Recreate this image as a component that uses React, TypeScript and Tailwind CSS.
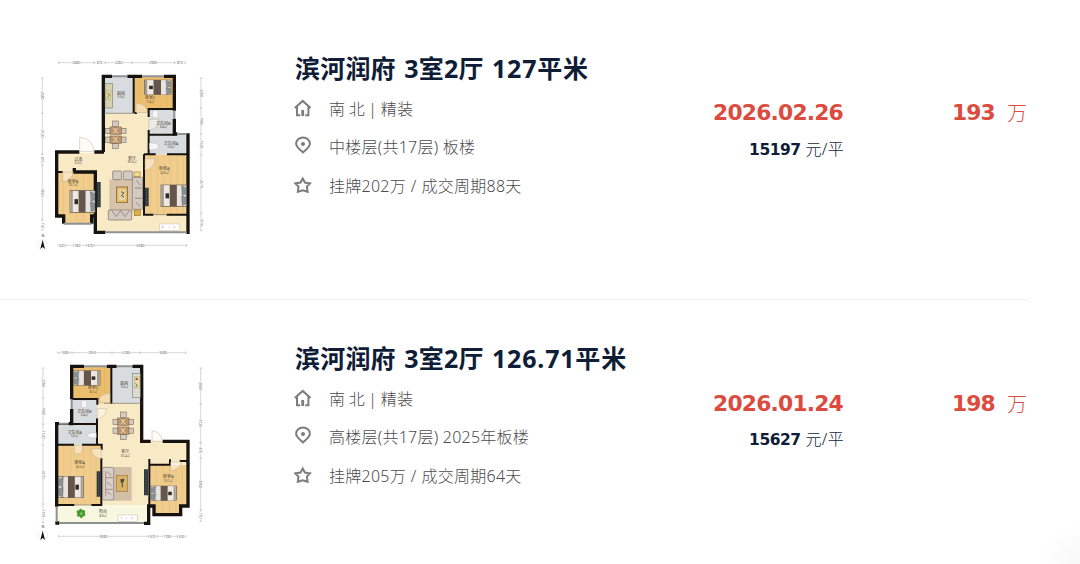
import type { ReactNode } from 'react';

type Deal = {
  id: number;
  title: string;
  size: string;
  orient: string;
  floor: string;
  cycle: string;
  date: string;
  price: string;
  unitPrice: string;
  plan: ReactNode;
};

const WALL = '#15120f';
const WOOD = '#ebbe6e';
const LIGHT_WOOD = '#f0cd8d';
const FLOOR = '#f9eac6';
const TILE = '#d9dcde';

// 户型图里的家具
function Bed({ x, y, w = 78, h = 64, flip = false }: { x: number; y: number; w?: number; h?: number; flip?: boolean }) {
  return (
    <g transform={`translate(${flip ? x + w : x} ${y}) scale(${(flip ? -w : w) / 78} ${h / 64})`}>
      <rect width="78" height="64" fill="#dcd6ce" stroke="#5d5047" strokeWidth="2" />
      <rect x="2" y="1" width="7" height="62" fill="#a59b92" />
      <rect x="9" y="1" width="17" height="62" fill="#eee8e0" />
      <rect x="27" y="0" width="22" height="64" fill="#65564b" />
      <rect x="49" y="1" width="12" height="62" fill="#e9e4de" />
      <path d="M64 3l12 6v18l-10 4zM64 33l12 4v20l-10 4z" fill="#8496a2" stroke="#5b5855" strokeWidth="1.5" />
      <rect x="14" y="25" width="11" height="15" fill="#2f2b29" />
    </g>
  );
}

function DiningTable({ x, y }: { x: number; y: number }) {
  return (
    <g transform={`translate(${x} ${y})`} stroke="#66564a" strokeWidth="1.5">
      <g fill="#d3ccc3">
        <rect x="22" y="0" width="18" height="16" />
        <rect x="22" y="68" width="18" height="15" />
        <rect x="0" y="22" width="17" height="16" />
        <rect x="0" y="48" width="17" height="16" />
        <rect x="45" y="22" width="17" height="16" />
        <rect x="45" y="48" width="17" height="16" />
      </g>
      <rect x="14" y="18" width="34" height="22" fill="#c09566" />
      <rect x="14" y="45" width="34" height="22" fill="#c09566" />
      <path d="M24 20l13 17M37 20L24 37M24 47l13 17M37 47L24 64" stroke="#eadfce" strokeWidth="3" />
    </g>
  );
}

function Tag({ x, y, name, area }: { x: number; y: number; name: string; area: string }) {
  return (
    <text x={x} y={y} textAnchor="middle" fill="#4a4236" fontSize="12">
      {name}
      <tspan x={x} dy="11" fontSize="9">
        {area}
      </tspan>
    </text>
  );
}

function HRule({ y, stops, labels }: { y: number; stops: number[]; labels: string[] }) {
  return (
    <g>
      <path d={`M${stops[0]} ${y}H${stops[stops.length - 1]}`} stroke="#bdbdbd" strokeWidth="1.8" />
      {stops.map((s) => (
        <path key={s} d={`M${s} ${y - 4}v8`} stroke="#a0a0a0" strokeWidth="1.5" />
      ))}
      {labels.map((l, i) => {
        const cx = (stops[i] + stops[i + 1]) / 2;
        return (
          <g key={i}>
            <rect x={cx - 11} y={y - 5} width="22" height="10" fill="#fff" />
            <text x={cx} y={y + 4} fontSize="10" textAnchor="middle" fill="#666">
              {l}
            </text>
          </g>
        );
      })}
    </g>
  );
}

function VRule({ x, stops, labels }: { x: number; stops: number[]; labels: string[] }) {
  return (
    <g transform={`translate(${x} 0) rotate(90)`}>
      <HRule y={0} stops={stops} labels={labels} />
    </g>
  );
}

function Compass({ y }: { y: number }) {
  return (
    <g>
      <text x="39" y={y - 22} fontSize="11" textAnchor="middle" fill="#333">
        N
      </text>
      <circle cx="38" cy={y} r="15" fill="none" stroke="#dedede" strokeWidth="1.5" />
      <path d={`M38 ${y - 15}l7 28-7-6-7 6z`} fill="#111" />
    </g>
  );
}

function PlanFrame({ children }: { children: ReactNode }) {
  return (
    <svg
      viewBox="0 0 570 615"
      className="h-[205px] w-[190px] shrink-0 font-['Noto_Sans','Noto_Sans_CJK_SC',sans-serif]"
    >
      {children}
    </svg>
  );
}

function PlanA() {
  return (
    <PlanFrame>
      <HRule y={38} stops={[86, 192, 226, 305, 433, 466]} labels={['2680', '870', '2280', '2980', '810']} />
      <VRule x={37} stops={[84, 190, 312, 345, 510, 540]} labels={['2680', '3120', '870', '3360', '710']} />
      <VRule x={513} stops={[84, 174, 252, 314, 490, 542]} labels={['2280', '1980', '1520', '4570', '1310']} />
      <HRule y={586} stops={[84, 108, 170, 194, 470]} labels={['620', '1780', '670', '6980']} />
      <Compass y={584} />

      {/* 地面 */}
      <path d="M80 308H222V190H358V310H474V548H195V368H80z" fill={FLOOR} />
      <path d="M222 80h88v110h-88z" fill={TILE} />
      <path d="M312 80h121v109H312z" fill={WOOD} />
      <path d="M356 178h77v75h-77zM356 254h118v59H356z" fill={TILE} />
      <path d="M80 366H196V496H184V520H101V496H80z" fill={LIGHT_WOOD} />
      <path d="M342 314H474V494H342z" fill={LIGHT_WOOD} />
      <path
        d="M330 82v106M350 82v95M370 82v95M390 82v95M410 82v95M100 368v126M120 368v126M140 368v150M160 368v150M180 368v126M362 316v176M382 316v176M402 316v176M422 316v176M442 316v176M460 316v176"
        stroke="#ddb062"
        strokeWidth="1.5"
        opacity="0.5"
      />

      {/* 墙体 */}
      <g fill="none" stroke={WALL} strokeWidth="10" strokeLinejoin="miter">
        <path d="M148 306H80V498H101V521M185 521V498H196V366H133V354M220 306V79H246M193 306H222M292 79H336M402 79H433V182M433 206V252H442M474 250V552M196 494V547H226" />
        <path d="M311 80v110" strokeWidth="6" />
        <path d="M314 189h7M353 177h80M356 177v24M356 240v73M356 254h78M342 313h35M411 313h63M342 313v181H370M410 494h64M82 366h16" strokeWidth="6" />
      </g>
      <path d="M246 79h46M336 79h66M433 182v24M442 252h27M101 521h84M226 547h244" stroke="#8d9395" strokeWidth="6" />
      <path d="M222 190h90M370 494h40" stroke="#756d60" strokeWidth="2" />

      {/* 门 */}
      <g fill="#fffaf0" fillOpacity="0.5" stroke="#bcae96" strokeWidth="1.5">
        <path d="M149 304v-42q39 2 43 42z" />
        <path d="M318 188v-28q32 0 34 28z" />
        <path d="M357 208h30q-2 30-30 32z" />
        <path d="M345 326h30q-2 30-30 36z" />
        <path d="M98 366h32q-2 24-32 30z" />
      </g>

      {/* 家具 */}
      <rect x="225" y="101" width="23" height="73" fill="#d5d1b1" stroke="#6a6758" strokeWidth="1.5" />
      <rect x="228" y="123" width="14" height="24" fill="#eee39e" stroke="#777" />
      <path d="M233 128l5 7-5 8" stroke="#333" fill="none" strokeWidth="2" />
      <Bed x={343} y={90} w={80} h={44} />
      <DiningTable x={226} y={213} />
      <Bed x={120} y={422} w={75} h={65} />
      <Bed x={393} y={405} w={76} h={64} />
      <rect x="367" y="181" width="17" height="22" fill="#f5f5f5" stroke="#aaa" />
      <path d="M358 279h14q15 1 14 11t-14 9h-14z" fill="#f6f6f6" stroke="#999" />
      <rect x="238" y="388" width="72" height="99" fill="#d6c3a9" />
      <g fill="#d3cac2" stroke="#7d6c65" strokeWidth="2">
        <rect x="248" y="363" width="27" height="26" rx="3" />
        <rect x="280" y="363" width="27" height="26" rx="3" />
        <rect x="307" y="382" width="31" height="96" rx="3" />
        <rect x="235" y="480" width="70" height="30" rx="3" />
        <path d="M315 414h22M315 445h22M246 482l13 18 13-18 13 18 13-18M319 391l12 14M319 457l12 14" />
      </g>
      <rect x="312" y="366" width="18" height="14" fill="#eedd99" stroke="#a77927" strokeWidth="2" />
      <rect x="313" y="480" width="18" height="17" fill="#d8b14d" stroke="#a77927" strokeWidth="2" />
      <rect x="259" y="411" width="34" height="46" fill="#e5be67" stroke="#765326" strokeWidth="2" />
      <rect x="266" y="418" width="20" height="32" fill="#e3d3a4" />
      <path d="M273 425l9 4-8 8 8 4" stroke="#5b5447" fill="none" strokeWidth="3" />
      <path d="M200 396h12v76h-12zM344 413h12v56h-12z" fill="#30383d" />
      <path d="M206 400v68M350 417v48" stroke="#66747d" strokeWidth="2" strokeDasharray="5 4" />
      <rect x="389" y="522" width="60" height="19" fill="#fff" stroke="#aaa" />
      <path d="M398 527v9M394 531h8M416 528l3 6M430 528l6 7M436 528l-6 7" stroke="#888" />

      <Tag x={273} y={134} name="厨房" area="5.3㎡" />
      <Tag x={361} y={148} name="卧室C" area="7.4㎡" />
      <Tag x={400} y={224} name="卫生间B" area="3.4㎡" />
      <Tag x={423} y={284} name="卫生间A" area="5.0㎡" />
      <Tag x={306} y={329} name="客厅" area="30.3㎡" />
      <Tag x={145} y={332} name="过道" area="6.3㎡" />
      <Tag x={129} y={398} name="卧室B" area="10.1㎡" />
      <Tag x={403} y={361} name="卧室A" area="14.5㎡" />
    </PlanFrame>
  );
}

function PlanB() {
  return (
    <PlanFrame>
      <HRule y={38} stops={[84, 126, 246, 331, 468]} labels={['1080', '2950', '2280', '3680']} />
      <VRule x={39} stops={[84, 174, 252, 316, 492, 548]} labels={['2280', '1980', '1520', '4570', '1310']} />
      <VRule x={512} stops={[84, 192, 308, 354, 510, 544]} labels={['2680', '3120', '870', '3360', '710']} />
      <HRule y={589} stops={[86, 355, 382, 442, 468]} labels={['6980', '670', '1780', '620']} />
      <Compass y={587} />

      {/* 地面 */}
      <path d="M200 190H335V304H474V374H356V495H216V313H200z" fill={FLOOR} />
      <path d="M124 80H244V190H202V178H124z" fill={WOOD} />
      <path d="M246 80h89v110h-89zM124 178h77v73h-77zM81 252H201V314H81z" fill={TILE} />
      <path d="M81 314H214V495H81z" fill={LIGHT_WOOD} />
      <path d="M358 375H473V496H452V523H372V496H358z" fill={LIGHT_WOOD} />
      <path d="M80 496H356V548H80z" fill="#f8f7df" />
      <path
        d="M144 82v94M164 82v94M184 82v94M204 82v106M224 82v106M101 316v178M121 316v178M141 316v178M161 316v178M181 316v178M199 316v178M378 377v142M398 377v142M418 377v142M438 377v142M457 377v118"
        stroke="#ddb062"
        strokeWidth="1.5"
        opacity="0.5"
      />

      {/* 墙体 */}
      <g fill="none" stroke={WALL} strokeWidth="10">
        <path d="M162 79H125V178M125 207V251H116M87 251H80V500M230 79H260M307 79H335V304H362M398 304H474V498H452V524H372V498H356V550H342M76 549H88" />
        <path d="M244 80v111M124 177h78v17M201 235v79M81 252h43M124 252h77M84 314h48M156 314h59v16M214 354v141H184M133 495H81M358 357v18M358 374v121M358 374h62v-16M449 363h24" strokeWidth="6" />
      </g>
      <path d="M162 79h68M260 79h47M125 178v29M87 251h29M80 500v45M88 549h254" stroke="#8d9395" strokeWidth="6" />
      <path d="M222 190h112M133 495h51" stroke="#756d60" strokeWidth="2" />

      {/* 门 */}
      <g fill="#fffaf0" fillOpacity="0.5" stroke="#bcae96" strokeWidth="1.5">
        <path d="M366 304v-32q28 4 31 32z" />
        <path d="M206 188q2-28 34-28v28z" />
        <path d="M202 206h28q-2 27-28 30z" />
        <path d="M133 316h24v18q-6 10-24 7z" />
        <path d="M214 326h-30q2 27 30 30z" />
        <path d="M422 366h32q-3 22-32 27z" />
      </g>

      {/* 家具 */}
      <Bed x={132} y={92} w={78} h={44} flip />
      <Bed x={86} y={409} w={74} h={64} flip />
      <Bed x={363} y={438} w={76} h={44} flip />
      <rect x="307" y="100" width="24" height="73" fill="#dcdbd0" stroke="#6a6758" strokeWidth="1.5" />
      <rect x="314" y="109" width="14" height="35" fill="#eee39e" stroke="#888" />
      <circle cx="320" cy="117" r="4" fill="#b44835" />
      <path d="M317 130l5 7-5 4" stroke="#333" fill="none" strokeWidth="2" />
      <DiningTable x={249} y={216} />
      <rect x="154" y="181" width="16" height="22" fill="#f5f5f5" stroke="#aaa" />
      <path d="M199 278h-14q-13 2-13 8t13 8h14z" fill="#f6f6f6" stroke="#999" />
      <rect x="241" y="381" width="64" height="101" fill="#d3bfa5" />
      <g fill="#d9d0c9" stroke="#85736b" strokeWidth="2">
        <rect x="218" y="382" width="33" height="98" rx="4" />
        <path d="M227 393v76M227 413h21M227 448h21M231 395l13 12M231 427l13 10M231 455l13 10" />
      </g>
      <rect x="259" y="406" width="34" height="48" fill="#d8b366" stroke="#a07a43" strokeWidth="2" />
      <path d="M271 418l12-2-2 10-8 4z" fill="#4d4a43" />
      <path d="M277 428v14" stroke="#4d4a43" strokeWidth="3" />
      <path d="M200 394h12v76h-12zM342 388h12v78h-12z" fill="#30383d" />
      <path d="M206 398v68M348 392v70" stroke="#66747d" strokeWidth="2" strokeDasharray="5 4" />
      <g fill="#459a2b">
        <ellipse cx="153" cy="520" rx="14" ry="7" transform="rotate(25 153 520)" />
        <ellipse cx="153" cy="520" rx="14" ry="6" transform="rotate(85 153 520)" />
        <ellipse cx="153" cy="520" rx="14" ry="6" transform="rotate(145 153 520)" />
      </g>
      <circle cx="154" cy="521" r="4" fill="#85c26b" />
      <rect x="264" y="525" width="58" height="19" fill="#fff" stroke="#999" />
      <path d="M272 530l5 8M290 532v5M304 531l6 7M310 531l-6 7" stroke="#888" />

      <Tag x={190} y={148} name="卧室C" area="8.1㎡" />
      <Tag x={283} y={134} name="厨房" area="5.6㎡" />
      <Tag x={163} y={218} name="卫生间B" area="3.4㎡" />
      <Tag x={134} y={281} name="卫生间A" area="5.0㎡" />
      <Tag x={149} y={372} name="卧室A" area="14.5㎡" />
      <Tag x={286} y={339} name="客厅" area="32.4㎡" />
      <Tag x={415} y={415} name="卧室B" area="10.1㎡" />
      <Tag x={219} y={520} name="阳台" area="8.0㎡" />
    </PlanFrame>
  );
}

function HomeIcon() {
  return (
    <svg viewBox="0 0 18 18" className="size-[18px] shrink-0 -translate-y-px" fill="none" stroke="#7d7d7d" strokeWidth="2">
      <path d="M.8 9 8.7 1.9 16.6 9" />
      <path d="M3 7.6v8.6h3.2M11.2 16.2h3.2V7.6" />
      <path d="M8.7 11v6" strokeWidth="2.8" />
    </svg>
  );
}

function PinIcon() {
  return (
    <svg viewBox="0 0 18 18" className="size-[18px] shrink-0 -translate-y-0.5" fill="none" stroke="#7d7d7d" strokeWidth="2">
      <path d="M9 16.5C5.6 13.4 2.1 10.9 2.1 7.8a6.9 6.4 0 0 1 13.8 0c0 3.1-3.5 5.6-6.9 8.7z" />
      <circle cx="9" cy="8" r="2" fill="#7d7d7d" stroke="none" />
    </svg>
  );
}

function StarIcon() {
  return (
    <svg viewBox="0 0 18 18" className="size-[18px] shrink-0 -translate-y-px" fill="none" stroke="#7d7d7d" strokeWidth="2">
      <path d="m8.7 2.6 2.2 4 5.1.8-3.1 3.2.7 5.2-4.9-1.4-4.9 1.4.7-5.2-3.1-3.2 5.1-.8z" />
    </svg>
  );
}

const deals: Deal[] = [
  {
    id: 1,
    title: '滨河润府 3室2厅',
    size: '127平米',
    orient: '南 北 | 精装',
    floor: '中楼层(共17层) 板楼',
    cycle: '挂牌202万 / 成交周期88天',
    date: '2026.02.26',
    price: '193',
    unitPrice: '15197',
    plan: <PlanA />,
  },
  {
    id: 2,
    title: '滨河润府 3室2厅',
    size: '126.71平米',
    orient: '南 北 | 精装',
    floor: '高楼层(共17层) 2025年板楼',
    cycle: '挂牌205万 / 成交周期64天',
    date: '2026.01.24',
    price: '198',
    unitPrice: '15627',
    plan: <PlanB />,
  },
];

function InfoLine({ icon, text, className = '' }: { icon: ReactNode; text: string; className?: string }) {
  return (
    <div className="flex h-[38.3px] items-center gap-[17px] text-base font-light tracking-[0.25px] text-[#4c4c4c]">
      {icon}
      <span className={`whitespace-nowrap ${className}`}>{text}</span>
    </div>
  );
}

function DealRow({ deal }: { deal: Deal }) {
  return (
    <li className="group flex h-[290px] w-[1029px] border-b border-[#f1f1f1] pt-10 pl-[30px] last:border-b-0">
      {deal.plan}

      <div className="ml-[74px] w-[370px] shrink-0">
        <h2 className="-mt-px ml-px h-[39px] text-[25px] leading-[38px] font-bold tracking-[0.2px] whitespace-nowrap text-[#101d37] [word-spacing:1.7px]">
          {deal.title} <span className="tracking-[0.8px]">{deal.size}</span>
        </h2>
        <div className="mt-0.5">
          <InfoLine icon={<HomeIcon />} text={deal.orient} className="[word-spacing:-1px]" />
          <InfoLine icon={<PinIcon />} text={deal.floor} />
          <InfoLine icon={<StarIcon />} text={deal.cycle} className="[word-spacing:0.5px]" />
        </div>
      </div>

      <div className="w-[180px] shrink-0 pt-[43px] text-right group-last:pt-11">
        <p className="h-[38px] pr-px font-['DejaVu_Sans',sans-serif] text-[21.8px] leading-[39px] font-bold tracking-[-0.8px] text-[#db4c3f] group-last:h-[37px]">
          {deal.date}
        </p>
        <p className="h-9 text-base leading-9 text-[#101d37]">
          <span className="font-['DejaVu_Sans',sans-serif] text-[15.5px] font-bold tracking-[-0.5px]">
            {deal.unitPrice}
          </span>
          <span className="ml-[5px] font-light tracking-[0.3px]">元/平</span>
        </p>
      </div>

      <div className="flex flex-1 items-baseline justify-end gap-3 pt-[43px] pr-[2px] leading-[39px] text-[#db4c3f] group-last:pt-11">
        <span className="font-['DejaVu_Sans',sans-serif] text-[21.8px] font-bold tracking-[-0.8px]">{deal.price}</span>
        <span className="translate-y-px text-xl font-light">万</span>
      </div>
    </li>
  );
}

export default function App() {
  return (
    <main className="h-[564px] w-[1080px] overflow-hidden bg-white bg-[radial-gradient(circle_at_100%_100%,#f8f8f8_0,#fff_42px)] pt-2.5 font-['Noto_Sans','Noto_Sans_CJK_SC',sans-serif]">
      <ul>
        {deals.map((deal) => (
          <DealRow key={deal.id} deal={deal} />
        ))}
      </ul>
    </main>
  );
}
